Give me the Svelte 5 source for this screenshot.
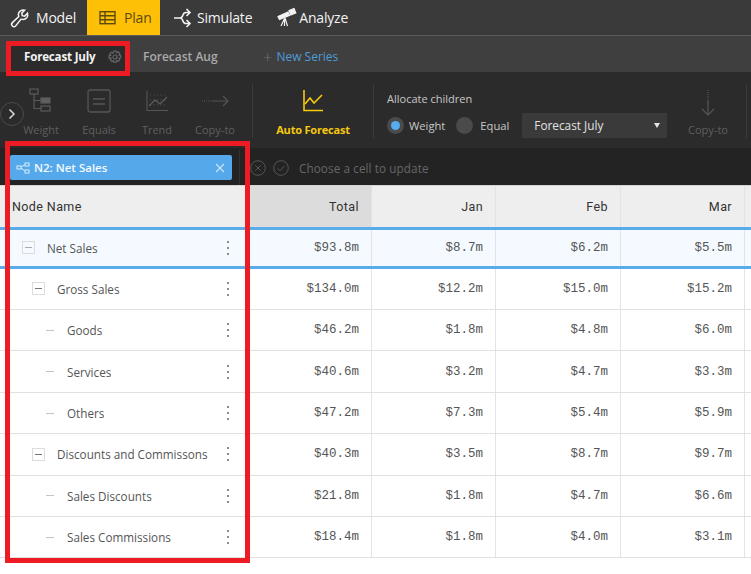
<script lang="ts">
  const months = ['Jan', 'Feb', 'Mar']
  const rows = [
    { name: 'Net Sales', depth: 0, parent: true, total: '$93.8m', vals: ['$8.7m', '$6.2m', '$5.5m'], selected: true },
    { name: 'Gross Sales', depth: 1, parent: true, total: '$134.0m', vals: ['$12.2m', '$15.0m', '$15.2m'] },
    { name: 'Goods', depth: 2, total: '$46.2m', vals: ['$1.8m', '$4.8m', '$6.0m'] },
    { name: 'Services', depth: 2, total: '$40.6m', vals: ['$3.2m', '$4.7m', '$3.3m'] },
    { name: 'Others', depth: 2, total: '$47.2m', vals: ['$7.3m', '$5.4m', '$5.9m'] },
    { name: 'Discounts and Commissons', depth: 1, parent: true, total: '$40.3m', vals: ['$3.5m', '$8.7m', '$9.7m'] },
    { name: 'Sales Discounts', depth: 2, total: '$21.8m', vals: ['$1.8m', '$4.7m', '$6.6m'] },
    { name: 'Sales Commissions', depth: 2, total: '$18.4m', vals: ['$1.8m', '$4.0m', '$3.1m'] },
  ]
</script>

<div class="app">
  <nav class="menu">
    <div class="menu-item model">
      <svg width="22" height="22" viewBox="0 0 26 26" fill="none" stroke="currentColor" stroke-width="1.8">
        <path d="M4 22.500c-1.500-1.500-1.200-2.800 0-4l7.500-7.200c-1-3.200 0-5.400 2-6.800 1.600-1 3.300-1.200 5-.7l-3.400 3.400.5 3 3 .6 3.300-3.400c.6 2 .2 3.800-1 5.300-1.600 1.900-4 2.500-6.600 1.600L7.800 22.500c-1.300 1.200-2.500 1.300-3.800 0z" />
      </svg>
      Model
    </div>
    <div class="menu-item active">
      <svg width="20" height="18" viewBox="0 0 20 18" fill="none" stroke="currentColor" stroke-width="1.400">
        <rect x="2" y="2.700" width="15" height="12" />
        <path d="M2 6.700h15M2 10.700h15M7 2.700v12" />
      </svg>
      Plan
    </div>
    <div class="menu-item simulate">
      <svg width="20" height="20" viewBox="0 0 20 20" fill="none" stroke="currentColor" stroke-width="1.600">
        <path d="M1 10h6c2 0 2.500-1.500 3-3 .4-1.500 1-2.500 3-2.500h4M7 10c2 0 2.500 1.500 3 3 .4 1.500 1 2.500 3 2.500h4M13.500 1l3.500 3.500L13.500 8M13.500 12l3.500 3.500-3.500 3.500" />
      </svg>
      Simulate
    </div>
    <div class="menu-item analyze">
      <svg width="24" height="22" viewBox="0 0 24 22" fill="currentColor" stroke="currentColor" stroke-width="1.200">
        <path d="M4 9.500l10-4.500 1.500 3.500L5.500 12.500z" />
        <path d="M15 3.500l5-2 1.800 4.500-5 2z" />
        <path d="M11 11l2.500 8M10.500 11.500l-3.500 7.500M10.500 12v7" fill="none" />
      </svg>
      Analyze
    </div>
  </nav>

  <div class="series">
    <div class="series-tab current">
      <b>Forecast July</b>
      <svg width="14" height="14" viewBox="0 0 14 14" fill="none" stroke="#666" stroke-width="1.200">
        <circle cx="7" cy="7" r="2" />
        <path d="M5.800 1h2.400l.4 1.700 1.500-.9 1.700 1.700-.9 1.500 1.700.4v2.400l-1.700.4.900 1.500-1.700 1.700-1.500-.9-.4 1.700H5.800l-.4-1.700-1.500.9-1.700-1.700.9-1.500L1 8.200V5.800l1.700-.4-.9-1.500 1.700-1.700 1.500.9z" />
      </svg>
    </div>
    <div class="series-tab">Forecast Aug</div>
    <div class="new-series"><span class="plus">+</span> New Series</div>
  </div>

  <div class="toolbar">
    <button class="collapse" aria-label="Expand">
      <svg width="8" height="12" viewBox="0 0 8 12" fill="none" stroke="#d8d8d8" stroke-width="1.500"><path d="M1.500 1.500 6 6l-4.500 4.500" /></svg>
    </button>
    <div class="tool">
      <svg width="24" height="26" viewBox="0 0 24 26" fill="none" stroke="#5a5a5a" stroke-width="1.200">
        <rect x="1" y="2" width="8" height="5" />
        <rect x="12" y="11" width="9" height="5" fill="#5f5f5f" />
        <rect x="12" y="19" width="9" height="5" />
        <path d="M5 7v14.500h7M5 13.500h7" />
      </svg>
      <span>Weight</span>
    </div>
    <div class="tool">
      <svg width="24" height="24" viewBox="0 0 24 24" fill="none" stroke="#555" stroke-width="1.300">
        <rect x="1" y="1" width="22" height="22" rx="2" />
        <path d="M6 10h12M6 15h12" />
      </svg>
      <span>Equals</span>
    </div>
    <div class="tool">
      <svg width="24" height="24" viewBox="0 0 24 24" fill="none" stroke="#555" stroke-width="1.100">
        <path d="M2 1.500v20h21" />
        <path d="M5 6h17M5 11h17M5 16h17" stroke-dasharray="1 2.500" />
        <path d="M4 17l6-6 5 4 7-7" stroke="#5f5f5f" />
      </svg>
      <span>Trend</span>
    </div>
    <div class="tool">
      <svg width="28" height="24" viewBox="0 0 28 24" fill="none" stroke="#555" stroke-width="1.200">
        <path d="M1 12h11" stroke-dasharray="1 1" />
        <path d="M12 12h15M22 7l5 5-5 5" />
      </svg>
      <span>Copy-to</span>
    </div>
    <div class="divider first"></div>
    <div class="tool auto">
      <svg width="24" height="24" viewBox="0 0 24 24" fill="none" stroke="#f6c90e" stroke-width="1.600">
        <path d="M3 1v20.500h19" />
        <path d="M4 15l5-6 4 5 8-8" />
      </svg>
      <span>Auto Forecast</span>
    </div>
    <div class="divider"></div>
    <div class="allocate">
      <div class="allocate-title">Allocate children</div>
      <div class="allocate-row">
        <span class="radio on"></span><span class="radio-label">Weight</span>
        <span class="radio"></span><span class="radio-label equal">Equal</span>
        <div class="select">Forecast July<span class="caret"></span></div>
      </div>
    </div>
    <div class="tool copy-down">
      <svg width="16" height="28" viewBox="0 0 16 28" fill="none" stroke="#555" stroke-width="1.200">
        <path d="M8 1v12" stroke-dasharray="1 1" />
        <path d="M8 12v14M2 20l6 6 6-6" />
      </svg>
      <span>Copy-to</span>
    </div>
    <div class="divider last"></div>
  </div>

  <div class="formula">
    <div class="chip-cell">
      <div class="chip">
        <svg width="14" height="12" viewBox="0 0 14 12" fill="none" stroke="#d6ecfb" stroke-width="1">
          <rect x="1" y="4" width="4" height="3" />
          <rect x="9" y="1" width="4" height="3" />
          <rect x="9" y="8" width="4" height="3" />
          <path d="M5 5l4-2.500M5 6l4 3" />
        </svg>
        <span class="chip-label">N2: Net Sales</span>
        <svg class="chip-x" width="10" height="10" viewBox="0 0 10 10" stroke="#cbe5f8" stroke-width="1.100"><path d="M1 1l8 8M9 1l-8 8" /></svg>
      </div>
    </div>
    <svg width="16" height="16" viewBox="0 0 16 16" fill="none" stroke="#555" stroke-width="1"><circle cx="8" cy="8" r="7.300" /><path d="M5.300 5.300l5.400 5.400M10.700 5.300l-5.400 5.400" /></svg>
    <svg width="16" height="16" viewBox="0 0 16 16" fill="none" stroke="#555" stroke-width="1"><circle cx="8" cy="8" r="7.300" /><path d="M4.500 8.300l2.500 2.500 4.500-5" /></svg>
    <span class="hint">Choose a cell to update</span>
  </div>

  <div class="grid">
    <div class="grid-row head">
      <div class="name-cell">Node Name</div>
      <div class="cell">Total</div>
      {#each months as m}<div class="cell">{m}</div>{/each}
      <div class="cell rest"></div>
    </div>
    {#each rows as row}
      <div class="grid-row" class:selected={row.selected}>
        <div class="name-cell depth-{row.depth}">
          {#if row.parent}
            <span class="toggle"></span>
          {:else}
            <span class="leaf"></span>
          {/if}
          <span class="node-name">{row.name}</span>
          <span class="kebab"><i></i><i></i><i></i></span>
        </div>
        <div class="cell num">{row.total}</div>
        {#each row.vals as v}<div class="cell num">{v}</div>{/each}
        <div class="cell rest"></div>
      </div>
    {/each}
  </div>

  <div class="mark mark-tab"></div>
  <div class="mark mark-col"></div>
</div>

<style>
  :global(body) {
    margin: 0;
    background: #fff;
  }

  .app {
    position: relative;
    width: 751px;
    height: 574px;
    overflow: hidden;
    font-family: "Open Sans", "Noto Sans", sans-serif;
  }

  .menu {
    display: flex;
    height: 35px;
    background: #3a3a3a;
    border-bottom: 1px solid #5a5a5a;
    color: #f2f2f2;
    font-size: 14px;
  }

  .menu-item {
    display: flex;
    align-items: center;
    letter-spacing: -0.2px;
  }

  .menu-item.model {
    width: 87px;
    padding-left: 9px;
    gap: 5px;
    box-sizing: border-box;
  }

  .menu-item.active {
    width: 73px;
    box-sizing: border-box;
    padding-left: 11px;
    gap: 6px;
    background: #fdc006;
    color: #5d4a10;
  }

  .menu-item.simulate {
    padding-left: 13px;
    gap: 4px;
  }

  .menu-item.analyze {
    padding-left: 22px;
    gap: 1px;
  }

  .series {
    display: flex;
    align-items: flex-end;
    height: 36px;
    background: #3f3f3f;
    font-size: 12px;
    color: #aaa;
  }

  .series-tab {
    display: flex;
    align-items: center;
    height: 31px;
    padding: 0 13px 0 18px;
    font-weight: 600;
    box-sizing: border-box;
    white-space: nowrap;
  }

  .series-tab.current {
    width: 114px;
    margin-left: 11px;
    padding: 0 0 0 13px;
    gap: 13px;
    background: #2b2b2b;
    color: #f4f4f4;
  }

  .series-tab.current b {
    font-size: 11.600px;
    font-weight: 700;
    letter-spacing: -0.2px;
  }

  .new-series {
    display: flex;
    align-items: center;
    gap: 4px;
    height: 31px;
    margin-left: 32px;
    color: #4f9bd9;
  }

  .plus {
    color: #6f6f6f;
    font-size: 17px;
    font-weight: 300;
  }

  .toolbar {
    display: flex;
    height: 76px;
    background: #2b2b2b;
    font-size: 11px;
  }

  .collapse {
    align-self: flex-start;
    flex: none;
    width: 24px;
    height: 24px;
    margin: 30px -12px 0 0;
    padding: 0;
    border: 1px solid #4b4b4b;
    border-radius: 50%;
    background: #2b2b2b;
    display: flex;
    align-items: center;
    justify-content: center;
  }

  .tool {
    display: flex;
    flex-direction: column;
    align-items: center;
    justify-content: flex-end;
    flex: none;
    width: 58px;
    color: #5f5f5f;
    padding-bottom: 11px;
    box-sizing: border-box;
    gap: 9px;
    white-space: nowrap;
  }

  .tool svg {
    flex: none;
  }

  .auto {
    width: 120px;
    color: #f6c90e;
    font-weight: 700;
    letter-spacing: -0.2px;
  }

  .copy-down {
    width: 68px;
    gap: 5px;
  }

  .divider {
    flex: none;
    width: 1px;
    height: 54px;
    margin-top: 12px;
    background: #3c3c3c;
  }

  .divider.first {
    margin-left: 8px;
  }

  .divider.last {
    margin-left: 4px;
  }

  .allocate {
    flex: none;
    width: 300px;
    padding: 16px 0 0 13px;
    box-sizing: border-box;
    color: #c8c8c8;
  }

  .allocate-title {
    font-size: 11px;
    height: 25px;
    line-height: 22px;
  }

  .allocate-row {
    display: flex;
    align-items: center;
    white-space: nowrap;
  }

  .radio {
    flex: none;
    width: 17px;
    height: 17px;
    border-radius: 50%;
    background: #4b4b4b;
    margin-right: 5px;
    position: relative;
  }

  .radio.on::after {
    content: "";
    position: absolute;
    top: 4px;
    left: 4px;
    width: 9px;
    height: 9px;
    border-radius: 50%;
    background: #55aef0;
  }

  .radio-label {
    margin-right: 11px;
    font-size: 11.200px;
  }

  .radio-label.equal {
    margin-left: 2px;
    margin-right: 13px;
  }

  .select {
    flex: none;
    position: relative;
    width: 145px;
    height: 25px;
    line-height: 24px;
    padding-left: 12px;
    box-sizing: border-box;
    background: #3a3a3a;
    color: #e2e2e2;
    font-size: 11.800px;
  }

  .caret {
    position: absolute;
    right: 7px;
    top: 10px;
    border: 3.500px solid transparent;
    border-top: 5px solid #e5e5e5;
    border-bottom: 0;
  }

  .formula {
    display: flex;
    align-items: center;
    gap: 7px;
    height: 37px;
    padding-top: 2px;
    box-sizing: border-box;
    background: #232323;
    color: #666;
    font-size: 11.700px;
  }

  .chip-cell {
    display: flex;
    align-items: center;
    width: 240px;
    height: 100%;
    padding-left: 10px;
    box-sizing: border-box;
    border-right: 1px solid #333;
    margin-right: 3px;
  }

  .chip {
    display: flex;
    align-items: center;
    width: 222px;
    height: 25px;
    padding: 0 7px 0 6px;
    box-sizing: border-box;
    border-radius: 2px;
    background: #55a9ea;
    color: #f5fbff;
    font-size: 11.500px;
    font-weight: 600;
  }

  .chip-label {
    margin-left: 4px;
    flex: 1;
  }

  .hint {
    margin-left: 3px;
    letter-spacing: 0.1px;
  }

  .grid-row {
    display: flex;
    height: 41.420px;
    box-sizing: border-box;
    border-bottom: 1px solid #e1e1e1;
    color: #555;
    font-size: 11.700px;
  }

  .grid-row.head {
    height: 42px;
    border-top: 1px solid #d5d5d5;
    border-bottom: 0;
    background: #eee;
    color: #333;
    font-family: Roboto, sans-serif;
    font-size: 12.500px;
    font-weight: 400;
    letter-spacing: 0.4px;
  }

  .grid-row.selected {
    height: 41.600px;
    border-top: 3px solid #5aabea;
    border-bottom: 3px solid #5aabea;
    background: #f4faff;
  }

  .name-cell {
    display: flex;
    align-items: center;
    flex: none;
    width: 250px;
    box-sizing: border-box;
    padding-left: 12px;
  }

  .depth-0 {
    padding-left: 22px;
  }

  .depth-1 {
    padding-left: 32px;
  }

  .depth-2 {
    padding-left: 46px;
  }

  .toggle {
    flex: none;
    position: relative;
    width: 11px;
    height: 11px;
    border: 1px solid #dcdcdc;
    margin-right: 12px;
  }

  .toggle::after {
    content: "";
    position: absolute;
    top: 5px;
    left: 2px;
    width: 7px;
    height: 1px;
    background: #777;
  }

  .depth-0 .toggle::after {
    background: #aaa;
  }

  .leaf {
    flex: none;
    width: 8px;
    height: 1px;
    background: #c4c4c4;
    margin-right: 13px;
  }

  .node-name {
    flex: 1;
    white-space: nowrap;
  }

  .kebab {
    display: flex;
    flex-direction: column;
    gap: 4px;
    margin-right: 21px;
  }

  .kebab i {
    width: 2px;
    height: 2px;
    background: #666;
    border-radius: 50%;
  }

  .cell {
    display: flex;
    align-items: center;
    justify-content: flex-end;
    flex: none;
    width: 124px;
    box-sizing: border-box;
    padding-right: 12px;
    border-left: 1px solid #e3e3e3;
  }

  .grid-row > .cell:nth-child(2) {
    width: 121px;
    border-left: 0;
  }

  .grid-row > .cell:nth-child(4) {
    width: 125px;
  }

  .head > .cell:nth-child(2) {
    background: #dcdcdc;
  }

  .num {
    font-family: "Liberation Mono", monospace;
    font-size: 12.500px;
    color: #555;
  }

  .cell.rest {
    width: 20px;
  }

  .mark {
    position: absolute;
    border: 5px solid #ed1c24;
    box-sizing: border-box;
    pointer-events: none;
  }

  .mark-tab {
    left: 6px;
    top: 41px;
    width: 124px;
    height: 35px;
  }

  .mark-col {
    left: 5px;
    top: 141px;
    width: 245px;
    height: 422px;
  }
</style>
